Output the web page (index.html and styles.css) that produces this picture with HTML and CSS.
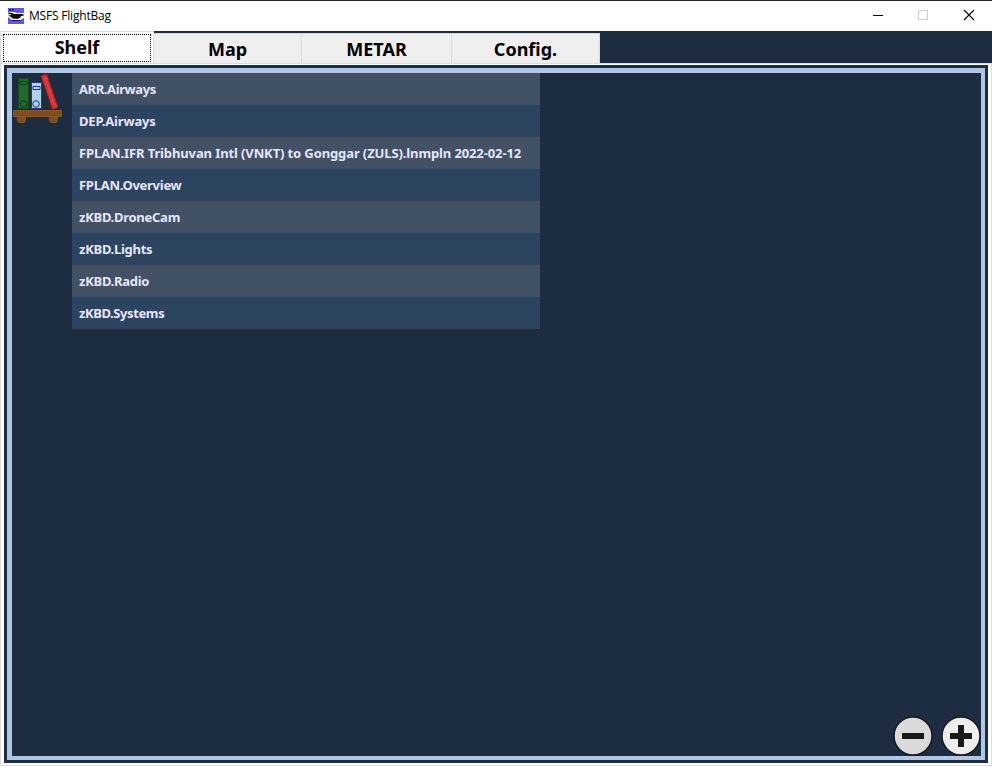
FILE: index.html
```html
<!DOCTYPE html>
<html lang="en">
<head>
<meta charset="utf-8">
<title>MSFS FlightBag</title>
<link rel="stylesheet" href="styles.css">
</head>
<body>
<div class="window">
  <header class="titlebar">
    <svg class="app-icon" width="16" height="16" viewBox="0 0 16 16">
      <path fill="#6258e0" d="M0 0h16v16H0z"/>
      <path fill="#29238c" d="M1 1h2v2H1zM4 1h2v2H4z"/>
      <path fill="#fff" d="M0 4h6l2 1h8v5l-4 2H4L0 9z"/>
      <path fill="#08080e" d="M0 4.500l4 .5 2 1h9l1 1.500-3 .5-1 2-3 1H5L3 9 0 7.500l4-.5-4-1.500z"/>
      <path fill="#fff" d="M5 10.500l4 .5v1H4zM13 5h2v1h-2z"/>
      <path fill="#151332" d="M3 12h9v1H4z"/>
    </svg>
    <span class="title">MSFS FlightBag</span>
    <svg class="controls" width="102" height="12" viewBox="0 0 102 12" fill="none" shape-rendering="crispEdges">
      <path d="M0 6.500h10" stroke="#000"/>
      <path d="M45.500 1.500h9v9h-9z" stroke="#ccc"/>
      <path d="M91 1l10 10M101 1L91 11" stroke="#000" stroke-width="1.100" shape-rendering="auto"/>
    </svg>
  </header>
  <nav class="tabs">
    <div class="tab active"><div class="focus"><span>Shelf</span></div></div>
    <div class="tab"><span>Map</span></div>
    <div class="tab"><span>METAR</span></div>
    <div class="tab last"><span>Config.</span></div>
  </nav>
  <div class="page">
    <main class="panel">
      <div class="shelf">
        <svg class="books" width="60" height="56" viewBox="0 0 60 56">
          <path d="M6.500 5.500h10v30h-10z" fill="#23682c" stroke="#104c1c"/>
          <path d="M8 8.500h7v3H8z" fill="none" stroke="#0c3f18"/>
          <circle cx="11.500" cy="31" r="3.300" fill="none" stroke="#0c3f18"/>
          <path d="M19.500 9.500h10v26h-10z" fill="#b5d0ee" stroke="#2038a4"/>
          <path d="M21 13.500h7v3h-7z" fill="none" stroke="#1c2fa5"/>
          <circle cx="24" cy="31" r="3.300" fill="none" stroke="#24365e"/>
          <path d="M29 3l5.500-2L46 34.500 40.500 36z" fill="#cc373b" stroke="#b5141f"/>
          <path d="M31 7l5-2M38 29l5-2M33 4l9 28" fill="none" stroke="#e04c4c" stroke-width=".7"/>
          <path d="M1.500 37.500h48v6h-48z" fill="#7b4d20" stroke="#8c551b"/>
          <path d="M5.500 43.500h8v4l-1 2h-5l-2-2zM37.500 43.500h8v4l-1 2h-5l-2-2z" fill="#7b4d20" stroke="#8c551b"/>
        </svg>
        <ul class="list">
          <li class="tight">ARR.Airways</li>
          <li class="wide">DEP.Airways</li>
          <li class="long">FPLAN.IFR Tribhuvan Intl (VNKT) to Gonggar (ZULS).lnmpln 2022-02-12</li>
          <li>FPLAN.Overview</li>
          <li>zKBD.DroneCam</li>
          <li>zKBD.Lights</li>
          <li>zKBD.Radio</li>
          <li class="tight">zKBD.Systems</li>
        </ul>
      </div>
      <div class="zoom">
        <svg width="40" height="40" viewBox="0 0 40 40"><circle cx="20" cy="20" r="19" fill="#dadada" stroke="#16191d" stroke-width="1.500"/><path d="M9 17h22v6H9z" fill="#1a1a1a"/></svg>
        <svg width="40" height="40" viewBox="0 0 40 40"><circle cx="20" cy="20" r="19" fill="#ededed" stroke="#16191d" stroke-width="1.500"/><path d="M17 9h6v8h8v6h-8v8h-6v-8H9v-6h8z" fill="#1a1a1a"/></svg>
      </div>
    </main>
  </div>
</div>
</body>
</html>
```
FILE: styles.css
```css
* { box-sizing: border-box; }
body { margin: 0; overflow: hidden; background: #fff; }
.window {
  display: flex;
  flex-direction: column;
  width: 992px;
  height: 767px;
  border-top: 1px solid #29252d;
  font-family: "Noto Sans", "Open Sans", sans-serif;
}
.titlebar {
  display: flex;
  align-items: center;
  height: 30px;
  padding: 0 17px 0 8px;
  background: #fff;
}
.app-icon { margin-top: -1px; }
.title {
  margin-left: 5px;
  font: 12px/16px "Open Sans", sans-serif;
  letter-spacing: -0.2px;
  color: #000;
}
.controls { margin-left: auto; margin-top: -2px; }
.tabs { display: flex; height: 32px; background: #1e2c42; }
.tab {
  display: flex;
  align-items: center;
  justify-content: center;
  width: 150px;
  height: 30px;
  margin-top: 2px;
  background: #efefef;
  border: solid #d9d9d9;
  border-width: 1px 1px 0 0;
  font-size: 18px;
  font-weight: 700;
  line-height: 24px;
  color: #000;
}
.tab.active {
  width: 154px;
  height: 34px;
  margin-top: 0;
  padding: 2px;
  align-items: flex-start;
  justify-content: flex-start;
  background: #fff;
  border-width: 1px 1px 0 1px;
}
.focus {
  display: flex;
  justify-content: center;
  width: 148px;
  height: 28px;
  border: 1px dotted #000;
}
.tab:nth-child(2) { width: 148px; }
.tab.last { width: 148px; }
.page {
  height: 703px;
  padding: 4px 3px 0 6px;
  border: solid #dcdcdc;
  border-width: 1px 1px 1px 1px;
  background: #fff;
}
.panel {
  position: relative;
  width: 978px;
  height: 692px;
  border: solid #b0c7e3;
  border-width: 5px 4px 4px 5px;
  outline: 3px solid #1e2c42;
  background: #1e2c42;
}
.shelf { display: flex; }
.books { flex: none; }
.list { width: 468px; margin: 0; padding: 0; list-style: none; }
.list li {
  height: 32px;
  padding-left: 7px;
  background: #2d4460;
  font-size: 13px;
  font-weight: 700;
  line-height: 32px;
  letter-spacing: -0.27px;
  color: #e6e6fa;
  white-space: nowrap;
}
.list li:nth-child(odd) { background: #425166; }
.list .tight { letter-spacing: -0.4px; }
.list .wide { letter-spacing: -0.15px; }
.list .long { letter-spacing: -0.115px; }
.zoom { position: absolute; right: 0; bottom: 0; display: flex; gap: 8px; }
.zoom svg { display: block; }
```
